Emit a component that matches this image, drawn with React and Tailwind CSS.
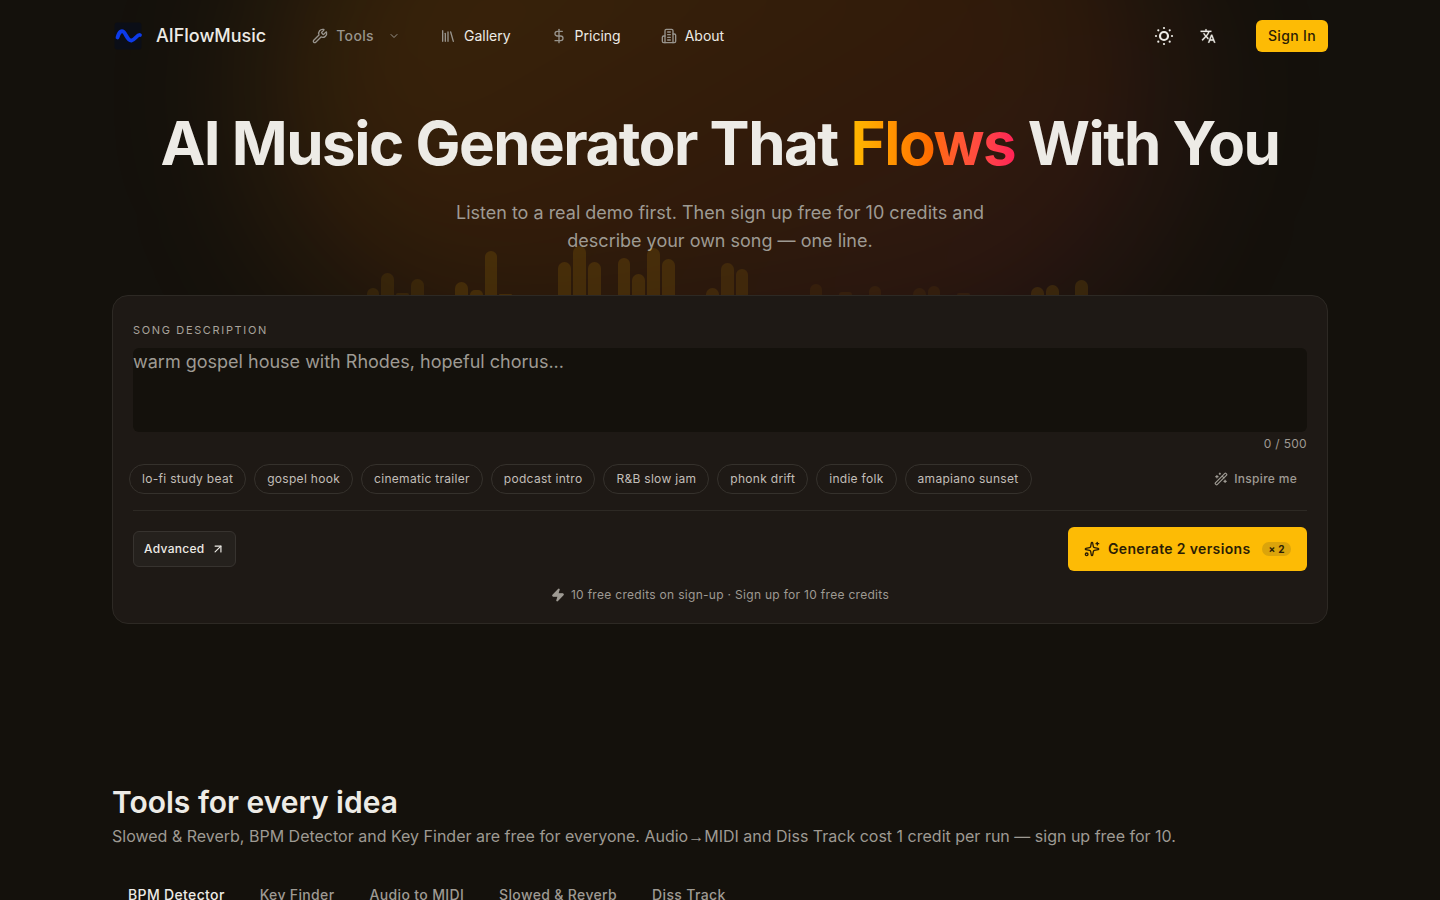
import { useState } from "react";
import {
  ArrowUpRight,
  ChevronDown,
  DollarSign,
  Library,
  Sparkles,
  WandSparkles,
  Wrench,
  Zap,
} from "lucide-react";

const PROMPTS = [
  "lo-fi study beat",
  "gospel hook",
  "cinematic trailer",
  "podcast intro",
  "R&B slow jam",
  "phonk drift",
  "indie folk",
  "amapiano sunset",
];

const TABS = ["BPM Detector", "Key Finder", "Audio to MIDI", "Slowed & Reverb", "Diss Track"];

const MAX_CHARS = 500;

// visible height of each equalizer bar above the composer
const BARS = [
  0, 0, 7, 22, 2, 16, 0, 0, 13, 5, 44, 1, 0, 0, 0, 33, 49, 33, 0, 37, 21, 47, 36, 0, 0, 7,
  32, 26, 0, 0, 0, 0, 11, 0, 3, 0, 9, 0, 0, 7, 9, 0, 2, 0, 0, 0, 0, 8, 10, 0, 15, 0,
];

const barOpacity = (i) => {
  if (i < 6) return 0.08;
  if (i < 23) return 0.12;
  if (i < 28) return 0.1;
  if (i < 45) return 0.05;
  return 0.11;
};

function LogoMark() {
  return (
    <svg viewBox="0 0 32 32" className="size-8" aria-hidden="true">
      <rect x="2.5" y="2.5" width="27" height="27" rx="3" fill="#0b0e17" />
      <path
        d="M5.500 17.500C7 12 10 8.800 12.800 13.300C15 17 16.500 21 19.500 20.500C23 20 25 14.500 28 15"
        fill="none"
        stroke="#0d3bea"
        strokeWidth="3.8"
        strokeLinecap="round"
      />
    </svg>
  );
}

function SunIcon() {
  return (
    <svg viewBox="0 0 24 24" className="size-6" fill="currentColor" aria-hidden="true">
      <circle cx="12" cy="12" r="4" fill="none" stroke="currentColor" strokeWidth="2.2" />
      <circle cx="12" cy="4" r="1.1" />
      <circle cx="12" cy="20" r="1.1" />
      <circle cx="4" cy="12" r="1.1" />
      <circle cx="20" cy="12" r="1.1" />
      <circle cx="6.3" cy="6.3" r="1.1" />
      <circle cx="17.7" cy="6.3" r="1.1" />
      <circle cx="6.3" cy="17.7" r="1.1" />
      <circle cx="17.7" cy="17.7" r="1.1" />
    </svg>
  );
}

function TranslateIcon() {
  return (
    <svg viewBox="0 0 24 24" className="size-4" fill="currentColor" stroke="currentColor" strokeWidth="0.4" aria-hidden="true">
      <path d="M12.870 15.070l-2.540-2.510.030-.030A17.520 17.520 0 0 0 14.070 6H17V4h-7V2H8v2H1v2h11.170C11.500 7.920 10.440 9.750 9 11.350 8.070 10.320 7.300 9.190 6.690 8h-2c.730 1.630 1.730 3.170 2.980 4.560l-5.090 5.020L4 19l5-5 3.110 3.110.760-2.040zM18.500 10h-2L12 22h2l1.120-3h4.750L21 22h2l-4.500-12zm-2.620 7l1.620-4.330L19.120 17h-3.240z" />
    </svg>
  );
}

function BuildingIcon({ className }) {
  return (
    <svg
      viewBox="0 0 24 24"
      className={className}
      fill="none"
      stroke="currentColor"
      strokeWidth="2"
      strokeLinecap="round"
      strokeLinejoin="round"
      aria-hidden="true"
    >
      <path d="M6 22V4a2 2 0 0 1 2-2h8a2 2 0 0 1 2 2v18Z" />
      <path d="M6 12H4a2 2 0 0 0-2 2v6a2 2 0 0 0 2 2h2" />
      <path d="M18 9h2a2 2 0 0 1 2 2v9a2 2 0 0 1-2 2h-2" />
      <path d="M10 6h4M10 10h4M10 14h4M10 18h4" />
    </svg>
  );
}

function NavLink({ icon: Icon, children }) {
  return (
    <a href="#" className="flex items-center gap-2 px-4 py-2 text-sm hover:text-white">
      <Icon className="size-4 text-[#98948d]" />
      {children}
    </a>
  );
}

function Header() {
  return (
    <header className="relative z-10">
      <div className="mx-auto flex h-18 max-w-7xl items-center px-8">
        <a href="#" className="flex items-center gap-3 text-lg font-medium">
          <LogoMark />
          AIFlowMusic
        </a>
        <nav className="ml-[30px] flex flex-1 items-center gap-2">
          <button type="button" className="flex items-center gap-2 px-4 py-2 text-sm font-medium tracking-wide text-[#98948d]">
            <Wrench className="size-4" />
            Tools
            <ChevronDown className="ml-1.5 size-3" />
          </button>
          <NavLink icon={Library}>Gallery</NavLink>
          <NavLink icon={DollarSign}>Pricing</NavLink>
          <NavLink icon={BuildingIcon}>About</NavLink>
        </nav>
        <div className="flex items-center">
          <button type="button" aria-label="Toggle theme" className="flex size-11 items-center justify-center">
            <SunIcon />
          </button>
          <button type="button" aria-label="Change language" className="mr-[26px] flex size-11 items-center justify-center">
            <TranslateIcon />
          </button>
          <button type="button" className="h-8 rounded-md bg-[#fdbb05] px-3 text-sm font-medium tracking-wide text-[#2b1d05]">
            Sign In
          </button>
        </div>
      </div>
    </header>
  );
}

function Equalizer() {
  return (
    <div className="absolute inset-x-0 bottom-full mx-auto flex max-w-[766px] items-end gap-0.5" aria-hidden="true">
      {BARS.map((h, i) => (
        <span key={i} className="flex-1 rounded-t-full bg-amber-400" style={{ height: h, opacity: barOpacity(i) }} />
      ))}
    </div>
  );
}

function Composer() {
  const [text, setText] = useState("");

  return (
    <form onSubmit={(e) => e.preventDefault()} className="relative rounded-2xl border border-[#2d2924] bg-[#1e1915] px-5 pt-6 pb-5">
      <label htmlFor="song" className="block text-[11px] leading-5 tracking-[0.15em] text-[#a8a39c] uppercase">
        Song description
      </label>
      <textarea
        id="song"
        rows={3}
        maxLength={MAX_CHARS}
        value={text}
        onChange={(e) => setText(e.target.value)}
        placeholder="warm gospel house with Rhodes, hopeful chorus..."
        className="mt-2 block w-full resize-none rounded-md bg-[#14110c] text-lg leading-7 outline-none placeholder:text-[#9e9a93]"
      />
      <div className="mt-1 text-right text-xs tracking-wide text-[#9e9a93]">
        {text.length} / {MAX_CHARS}
      </div>

      <div className="mt-3 -ml-1 flex items-center justify-between">
        <div className="flex flex-wrap gap-2">
          {PROMPTS.map((p) => (
            <button
              key={p}
              type="button"
              onClick={() => setText(p)}
              className="rounded-full border border-[#35312c] px-3 py-1.5 text-xs tracking-wide text-[#c2beb8]"
            >
              {p}
            </button>
          ))}
        </div>
        <button type="button" className="flex items-center gap-1.5 px-2.5 text-xs font-medium tracking-wide text-[#9e9a93]">
          <WandSparkles className="size-3.5" />
          Inspire me
        </button>
      </div>

      <div className="mt-4 flex items-center justify-between border-t border-[#2d2924] pt-4">
        <button
          type="button"
          className="flex h-9 items-center gap-1.5 rounded-md border border-[#37332f] bg-[#25211d] px-2.5 text-xs font-medium tracking-wide"
        >
          Advanced
          <ArrowUpRight className="size-3.5" />
        </button>
        <button
          type="submit"
          className="flex h-11 items-center gap-2 rounded-md bg-[#fdbb05] px-4 text-sm font-semibold tracking-wide text-[#2b1d05]"
        >
          <Sparkles className="size-4" />
          Generate 2 versions
          <span className="ml-1 rounded-full bg-[#dba40b] px-1.5 text-[10px] leading-[14px] font-bold">× 2</span>
        </button>
      </div>

      <p className="mt-4 flex items-center justify-center gap-1.5 text-xs tracking-wide text-[#9e9a93]">
        <Zap className="size-3.5" fill="currentColor" />
        10 free credits on sign-up · Sign up for 10 free credits
      </p>
    </form>
  );
}

export default function App() {
  return (
    <div className="relative min-h-screen overflow-hidden bg-[#14110c] font-['Inter',sans-serif] text-[#edebe6]">
      <div
        className="absolute -top-40 left-1/2 h-[520px] w-[900px] -translate-x-1/2 rounded-full bg-linear-to-br from-amber-500/18 via-orange-500/13 to-rose-500/10 blur-[80px]"
        aria-hidden="true"
      />
      <Header />

      <main className="relative mx-auto max-w-7xl px-8">
        <section className="pt-10 text-center">
          <h1 className="text-6xl leading-[63px] font-bold tracking-tight">
            AI Music Generator That{" "}
            <span className="bg-linear-to-r from-[#ffb900] via-[#ff6900] to-[#ff2056] bg-clip-text text-transparent">Flows</span>{" "}
            With You
          </h1>
          <p className="mx-auto mt-6 max-w-xl text-lg leading-7 text-[#9e9a93]">
            Listen to a real demo first. Then sign up free for 10 credits and describe your own song — one line.
          </p>
        </section>

        <div className="relative mt-10">
          <Equalizer />
          <Composer />
        </div>

        <section className="mt-40">
          <h2 className="text-3xl font-semibold">Tools for every idea</h2>
          <p className="mt-1 text-[#9e9a93]">
            Slowed &amp; Reverb, BPM Detector and Key Finder are free for everyone. Audio
            <span className="font-['Liberation_Sans',sans-serif]">→</span>MIDI and Diss Track cost 1 credit per run — sign up
            free for 10.
          </p>
          <div role="tablist" className="mt-7 flex">
            {TABS.map((tab, i) => (
              <button
                key={tab}
                type="button"
                role="tab"
                aria-selected={i === 0}
                className="mr-[3px] px-4 py-2 text-sm font-medium tracking-wide text-[#9e9a93] aria-selected:text-[#edebe6]"
              >
                {tab}
              </button>
            ))}
          </div>
        </section>
      </main>
    </div>
  );
}
